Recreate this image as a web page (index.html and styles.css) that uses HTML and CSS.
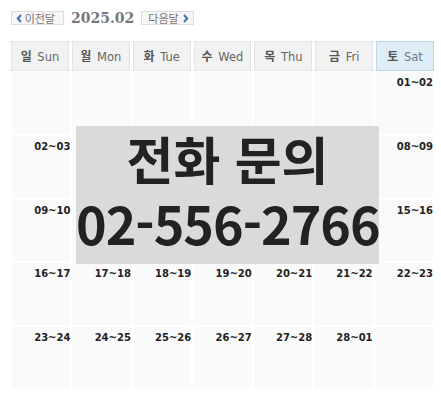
FILE: index.html
```html
<!DOCTYPE html>
<html lang="ko">
<head>
  <meta charset="UTF-8" />
  <meta name="viewport" content="width=device-width, initial-scale=1.0"/>
  <title>예약 달력</title>
  <link rel="stylesheet" href="styles.css">
</head>
<body>
  <div class="calendar">
    <div class="month-nav">
      <a class="nav-btn prev" href="#">
        <svg class="arrow" width="6" height="9" viewBox="0 0 6 9"><path d="M5 1 1.8 4.5 5 8" fill="none" stroke="#3d72b8" stroke-width="2"/></svg>
        이전달
      </a>
      <span class="month">2025.02</span>
      <a class="nav-btn next" href="#">
        다음달
        <svg class="arrow" width="6" height="9" viewBox="0 0 6 9"><path d="M1 1 4.2 4.5 1 8" fill="none" stroke="#3d72b8" stroke-width="2"/></svg>
      </a>
    </div>

    <div class="week">
      <div class="wday"><span class="ko">일</span> Sun</div>
      <div class="wday"><span class="ko">월</span> Mon</div>
      <div class="wday"><span class="ko">화</span> Tue</div>
      <div class="wday"><span class="ko">수</span> Wed</div>
      <div class="wday"><span class="ko">목</span> Thu</div>
      <div class="wday"><span class="ko">금</span> Fri</div>
      <div class="wday sat"><span class="ko">토</span> Sat</div>
    </div>

    <div class="days" id="days"></div>

    <div class="notice">
      <p class="notice-title">전화 문의</p>
      <p class="notice-phone">02-556-2766</p>
    </div>
  </div>

  <script>
    // February 2025 starts on a Saturday; each cell shows a one-night stay (check-in~check-out)
    const days = document.getElementById("days");
    const first = 6;
    const total = 28;

    for (let i = 0; i < 35; i++) {
      const cell = document.createElement("div");
      cell.className = "day";
      const d = i - first + 1;
      if (d >= 1 && d <= total) {
        const next = d === total ? 1 : d + 1;
        const label = document.createElement("span");
        label.className = "stay";
        label.textContent = String(d).padStart(2, "0") + "~" + String(next).padStart(2, "0");
        cell.appendChild(label);
      }
      days.appendChild(cell);
    }
  </script>
</body>
</html>
```

FILE: styles.css
```css
body {
  margin: 0;
  background: #fff;
  font-family: "DejaVu Sans", "Noto Sans CJK KR", sans-serif;
}

.calendar {
  position: relative;
  width: 441px;
  height: 395px;
}

.month-nav {
  display: flex;
  align-items: center;
  gap: 7px;
  padding: 11px 0 0 11px;
  height: 14px;
}

.nav-btn {
  display: flex;
  align-items: center;
  justify-content: space-between;
  box-sizing: border-box;
  width: 53px;
  height: 14px;
  padding: 0 4px;
  border: 1px solid #dcdcdc;
  background: #f6f6f6;
  color: #777;
  font-family: "Noto Sans CJK KR", sans-serif;
  font-size: 11px;
  text-decoration: none;
}

.nav-btn.prev {
  padding-right: 8px;
}

.nav-btn.next {
  padding-left: 6px;
}

.month {
  font-family: "DejaVu Serif", serif;
  font-weight: bold;
  font-size: 14px;
  color: #777;
}

.week {
  display: grid;
  grid-template-columns: repeat(7, 1fr);
  gap: 3px;
  margin: 16px 0 0 11px;
  width: 423px;
}

.wday {
  height: 28px;
  line-height: 28px;
  text-align: center;
  border: 1px solid #e4e4e4;
  background: #f2f2f2;
  color: #666;
  font-size: 11.5px;
}

.wday .ko {
  font-family: "Noto Sans CJK KR", sans-serif;
  font-weight: bold;
  font-size: 12px;
  color: #555;
  margin-right: 2px;
}

.wday.sat {
  background: #deedf6;
  border-color: #bcd6e8;
  color: #6a7d8c;
}

.days {
  display: grid;
  grid-template-columns: repeat(7, 1fr);
  grid-auto-rows: 61.75px;
  gap: 2px;
  margin: 1px 0 0 12px;
  width: 421px;
}

.day {
  background: #fafafa;
  text-align: right;
  padding-top: 1px;
  line-height: 16px;
}

.stay {
  font-size: 10px;
  font-weight: bold;
  color: #222;
}

.notice {
  position: absolute;
  left: 76px;
  top: 126px;
  width: 303px;
  height: 138px;
  background: #dadada;
  color: #222;
  text-align: center;
  font-family: "Noto Sans CJK KR", sans-serif;
  font-weight: bold;
  white-space: nowrap;
}

.notice p {
  margin: 0;
}

.notice-title {
  font-size: 51px;
  line-height: 64px;
}

.notice-phone {
  margin-top: 3px;
  font-size: 52px;
  line-height: 66px;
  letter-spacing: -1px;
}
```
